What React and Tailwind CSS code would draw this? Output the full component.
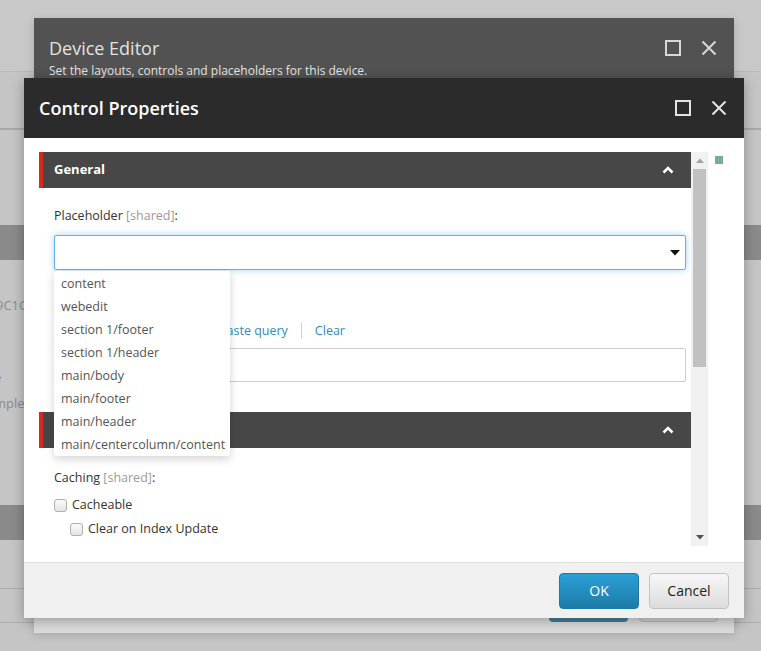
import React from 'react';

const items = [
  'content',
  'webedit',
  'section 1/footer',
  'section 1/header',
  'main/body',
  'main/footer',
  'main/header',
  'main/centercolumn/content',
];

const SquareIcon = () => (
  <svg width="16" height="16" viewBox="0 0 16 16">
    <rect x="1" y="1" width="14" height="14" fill="none" stroke="currentColor" strokeWidth="2" />
  </svg>
);

const CloseIcon = () => (
  <svg width="16" height="16" viewBox="0 0 16 16">
    <path d="M1.5 1.5 L14.5 14.5 M14.5 1.5 L1.5 14.5" stroke="currentColor" strokeWidth="2" />
  </svg>
);

const ChevronUp = () => (
  <svg width="12" height="8" viewBox="0 0 12 8">
    <path d="M1.5 6.5 L6 2 L10.5 6.5" fill="none" stroke="#fff" strokeWidth="2.6" />
  </svg>
);

const SectionHeader = ({ title }) => (
  <div className="flex h-[36px] items-center justify-between border-l-4 border-[#d42b1f] bg-[#474747] pl-[11px] pr-[17px]">
    <span className="text-[13px] font-bold text-white">{title}</span>
    <ChevronUp />
  </div>
);

const Checkbox = () => (
  <span className="inline-block h-[13px] w-[13px] rounded-[3px] border border-[#b0b0b0] bg-gradient-to-b from-[#fafafa] to-[#e4e4e4]" />
);

export default function App() {
  return (
    <div className="relative h-[651px] w-[761px] overflow-hidden bg-[#c5c5c5] font-['Open_Sans',sans-serif]">
      {/* page behind the overlay */}
      <div className="flex flex-col">
        <div className="h-[71px] bg-[#c8c8c8]" />
        <div className="h-px bg-[#b9b9b9]" />
        <div className="h-[56px]" />
        <div className="h-[2px] bg-[#a8a8a8]" />
        <div className="h-[95px]" />
        <div className="h-[35px] bg-[#8a8a8a]" />
        <div className="relative h-[245px] text-[13px] text-[#8c8c8c]">
          <div className="ml-[-4px] mt-[36px]">9C1C</div>
          <div className="ml-[-6px] mt-[52px]">e</div>
          <div className="ml-[-6px] mt-[7px]">mple.</div>
        </div>
        <div className="h-[35px] bg-[#8a8a8a]" />
        <div className="h-[48px]" />
        <div className="h-px bg-[#adadad]" />
        <div className="h-[33px]" />
        <div className="h-px bg-[#adadad]" />
      </div>

      {/* Device Editor (behind) */}
      <div className="absolute left-[34px] top-[18px] flex h-[615px] w-[700px] flex-col bg-[#dcdcdc] shadow-[0_2px_8px_rgba(0,0,0,0.15)]">
        <div className="flex h-[60px] items-start justify-between bg-[#525252] pl-[15px] pr-[17px]">
          <div className="pt-[18px]">
            <div className="text-[18px] leading-[24px] text-[#e2e2e2]">Device Editor</div>
            <div className="mt-[3px] text-[12px] leading-[16px] text-[#e6e6e6]">
              Set the layouts, controls and placeholders for this device.
            </div>
          </div>
          <div className="flex items-center gap-[20px] pt-[22px] text-[#d8d8d8]">
            <SquareIcon />
            <CloseIcon />
          </div>
        </div>
        <div className="flex-1" />
        <div className="flex justify-end gap-[11px] pr-[16px]">
          <div className="h-[36px] w-[79px] rounded-[4px] bg-[#457e98]" />
          <div className="h-[36px] w-[79px] rounded-[4px] border border-[#b8b8b8] bg-[#d2d2d2]" />
        </div>
        <div className="h-[11px]" />
      </div>

      {/* Control Properties */}
      <div className="absolute left-[24px] top-[78px] flex h-[540px] w-[720px] flex-col bg-white shadow-[0_3px_12px_rgba(0,0,0,0.3)]">
        <div className="flex h-[60px] items-center justify-between bg-[#2b2b2b] pl-[15px] pr-[17px]">
          <span className="text-[18px] font-semibold text-white">Control Properties</span>
          <div className="flex items-center gap-[20px] text-[#e4e4e4]">
            <SquareIcon />
            <CloseIcon />
          </div>
        </div>

        <div className="flex flex-1 pl-[15px] pt-[14px]">
          <div className="relative h-[394px] w-[652px] overflow-hidden">
            <SectionHeader title="General" />
            <div className="pl-[15px] pr-[5px]">
              <div className="mt-[19px] text-[12.5px] leading-[18px] text-[#333]">
                Placeholder <span className="text-[#9a9a9a]">[shared]</span>:
              </div>
              <div className="relative mt-[10px]">
                <div className="flex h-[35px] items-center justify-end rounded-[2px] border border-[#66afe9] pr-[5px] shadow-[0_0_7px_rgba(102,175,233,0.55)]">
                  <svg width="10" height="6" viewBox="0 0 10 6">
                    <path d="M0 0 H10 L5 5.5 Z" fill="#111" />
                  </svg>
                </div>
                <div className="absolute left-0 top-[calc(100%+1px)] z-10 w-[176px] rounded-b-[3px] bg-white pt-[1px] shadow-[0_3px_10px_rgba(0,0,0,0.18)]">
                  {items.map((it) => (
                    <div key={it} className="h-[23px] px-[7px] text-[12.5px] leading-[23px] text-[#555]">
                      {it}
                    </div>
                  ))}
                </div>
              </div>
              <div className="mt-[20px] text-[12.5px] leading-[18px] text-[#333]">
                Data Source <span className="text-[#9a9a9a]">[shared]</span>:
              </div>
              <div className="mt-[15px] flex h-[16px] items-center pl-[165px] text-[12.5px] text-[#2b8dc2]">
                <span>Paste query</span>
                <span className="mx-[13px] h-[16px] w-px bg-[#cfcfcf]" />
                <span>Clear</span>
              </div>
              <div className="mt-[9px] h-[34px] rounded-[2px] border border-[#cccccc]" />
            </div>
            <div className="mt-[30px]">
              <SectionHeader title="Caching" />
            </div>
            <div className="pl-[15px]">
              <div className="mt-[21px] text-[12.5px] leading-[18px] text-[#333]">
                Caching <span className="text-[#9a9a9a]">[shared]</span>:
              </div>
              <div className="mt-[9px] flex items-center gap-[5px] text-[12.5px] leading-[18px] text-[#333]">
                <Checkbox />
                <span>Cacheable</span>
              </div>
              <div className="ml-[16px] mt-[6px] flex items-center gap-[5px] text-[12.5px] leading-[18px] text-[#333]">
                <Checkbox />
                <span>Clear on Index Update</span>
              </div>
              <div className="ml-[16px] mt-[6px] flex items-center gap-[5px] text-[12.5px] leading-[18px] text-[#333]">
                <Checkbox />
                <span>Vary by Data</span>
              </div>
            </div>
          </div>

          <div className="flex h-[394px] w-[17px] flex-col items-center bg-[#f1f1f1]">
            <div className="flex h-[17px] items-center justify-center">
              <svg width="8" height="5" viewBox="0 0 8 5">
                <path d="M0 5 L4 0.5 L8 5 Z" fill="#a3a3a3" />
              </svg>
            </div>
            <div className="h-[198px] w-[13px] bg-[#c1c1c1]" />
            <div className="flex-1" />
            <div className="flex h-[17px] items-center justify-center">
              <svg width="8" height="5" viewBox="0 0 8 5">
                <path d="M0 0 L8 0 L4 4.5 Z" fill="#505050" />
              </svg>
            </div>
          </div>

          <div className="ml-[7px] mt-[4px] h-[8px] w-[8px] bg-[#7aab99]" />
        </div>

        <div className="flex h-[56px] items-center justify-end gap-[10px] border-t border-[#dedede] bg-[#f0f0f0] pr-[15px]">
          <button className="h-[36px] w-[80px] rounded-[4px] border border-[#1d7aa5] bg-gradient-to-b from-[#2ba0d8] to-[#1e7ba7] text-[14px] text-white">
            OK
          </button>
          <button className="h-[36px] w-[80px] rounded-[4px] border border-[#c3c3c3] bg-gradient-to-b from-[#f7f7f7] to-[#dcdcdc] text-[14px] text-[#222]">
            Cancel
          </button>
        </div>
      </div>
    </div>
  );
}
